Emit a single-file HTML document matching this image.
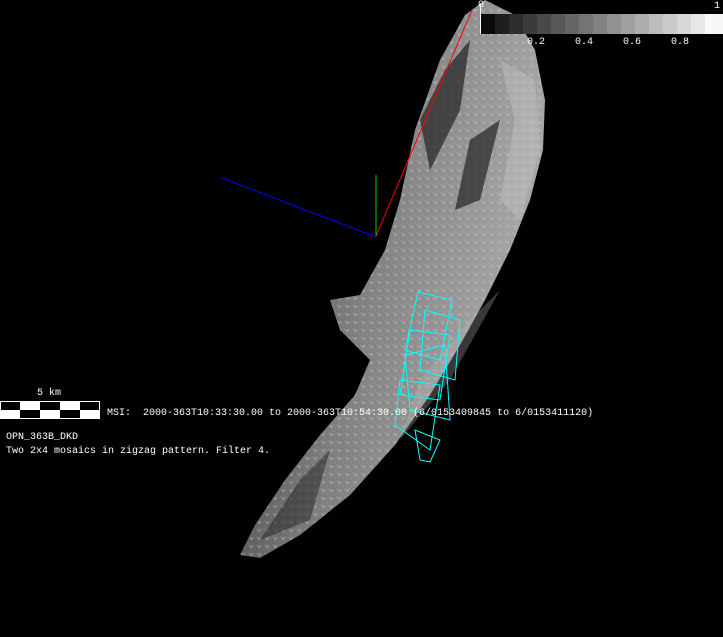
<!DOCTYPE html>
<html><head><style>
body{margin:0;background:#000;width:723px;height:637px;overflow:hidden;position:relative;font-family:"Liberation Mono",monospace;color:#fff;font-size:10px}
.t{position:absolute;white-space:pre;line-height:12px}
</style></head><body>
<svg width="723" height="637" style="position:absolute;left:0;top:0">
<defs>
<linearGradient id="g" x1="0" y1="0" x2="1" y2="0.3">
<stop offset="0" stop-color="#3a3a3a"/><stop offset="0.5" stop-color="#808080"/><stop offset="1" stop-color="#a8a8a8"/>
</linearGradient>
<pattern id="p" width="8" height="8" patternUnits="userSpaceOnUse">
<rect width="8" height="8" fill="none"/><path d="M1 1l3 3M5 1l-2 3" stroke="#ddd" stroke-width="0.7" opacity="0.5"/>
</pattern>
</defs>
<polygon fill="url(#g)" points="485,0 515,15 535,50 545,100 543,150 530,200 510,250 485,300 460,345 430,395 395,445 350,495 300,535 260,558 240,555 255,525 285,480 320,435 355,395 370,360 340,330 330,300 360,295 385,250 400,200 415,130 440,60 465,15"/>
<polygon fill="url(#p)" points="485,0 515,15 535,50 545,100 543,150 530,200 510,250 485,300 460,345 430,395 395,445 350,495 300,535 260,558 240,555 255,525 285,480 320,435 355,395 370,360 340,330 330,300 360,295 385,250 400,200 415,130 440,60 465,15"/>
<polygon fill="#222" opacity="0.7" points="420,120 445,70 470,40 460,110 430,170"/>
<polygon fill="#111" opacity="0.6" points="470,140 500,120 480,200 455,210"/>
<polygon fill="#222" opacity="0.5" points="260,540 300,480 330,450 310,520"/>
<polygon fill="#ccc" opacity="0.35" points="500,60 535,80 540,150 520,220 500,200 515,120"/>
<polygon fill="#bbb" opacity="0.3" points="420,380 470,320 500,290 450,380 400,440"/>
<line x1="472" y1="10" x2="376" y2="236" stroke="#f00"/>
<line x1="222" y1="178" x2="376" y2="237" stroke="#00f"/>
<line x1="376" y1="175" x2="376" y2="236" stroke="#0c0"/>
<g stroke="#0ff" fill="none">
<polygon points="418,292 452,300 440,360 405,350"/>
<polygon points="410,330 450,335 440,400 400,395"/>
<polygon points="400,380 440,385 430,450 395,425"/>
<polygon points="415,430 440,440 430,462 420,460"/>
<polygon points="425,310 460,320 455,380 420,370"/>
<polygon points="405,355 445,345 450,420 410,410"/>
</g>
<g id="cb"></g>
<line x1="480.5" y1="4" x2="480.5" y2="34" stroke="#fff"/>
<rect x="0" y="401" width="100" height="18" fill="#fff"/>
<g fill="#000">
<rect x="1" y="402" width="19" height="8"/><rect x="40" y="402" width="20" height="8"/><rect x="80" y="402" width="19" height="8"/>
<rect x="20" y="410" width="20" height="8"/><rect x="60" y="410" width="20" height="8"/>
</g>
<g>
<rect x="481" y="14" width="14" height="20" fill="#0a0a0a"/>
<rect x="495" y="14" width="14" height="20" fill="#1e1e1e"/>
<rect x="509" y="14" width="14" height="20" fill="#2c2c2c"/>
<rect x="523" y="14" width="14" height="20" fill="#3b3b3b"/>
<rect x="537" y="14" width="14" height="20" fill="#494949"/>
<rect x="551" y="14" width="14" height="20" fill="#575757"/>
<rect x="565" y="14" width="14" height="20" fill="#666"/>
<rect x="579" y="14" width="14" height="20" fill="#747474"/>
<rect x="593" y="14" width="14" height="20" fill="#828282"/>
<rect x="607" y="14" width="14" height="20" fill="#919191"/>
<rect x="621" y="14" width="14" height="20" fill="#9f9f9f"/>
<rect x="635" y="14" width="14" height="20" fill="#adadad"/>
<rect x="649" y="14" width="14" height="20" fill="#bcbcbc"/>
<rect x="663" y="14" width="14" height="20" fill="#cacaca"/>
<rect x="677" y="14" width="14" height="20" fill="#d8d8d8"/>
<rect x="691" y="14" width="14" height="20" fill="#e7e7e7"/>
<rect x="705" y="14" width="18" height="20" fill="#f8f8f8"/>
</g>
</svg>
<div class="t" style="left:478px;top:0px">0</div>
<div class="t" style="left:714px;top:1px">1</div>
<div class="t" style="left:527px;top:37px">0.2</div>
<div class="t" style="left:575px;top:37px">0.4</div>
<div class="t" style="left:623px;top:37px">0.6</div>
<div class="t" style="left:671px;top:37px">0.8</div>
<div class="t" style="left:37px;top:388px">5 km</div>
<div class="t" style="left:107px;top:408px">MSI:  2000-363T10:33:30.00 to 2000-363T10:54:30.00 (6/0153409845 to 6/0153411120)</div>
<div class="t" style="left:6px;top:432px">OPN_363B_DKD</div>
<div class="t" style="left:6px;top:446px">Two 2x4 mosaics in zigzag pattern. Filter 4.</div>
</body></html>
